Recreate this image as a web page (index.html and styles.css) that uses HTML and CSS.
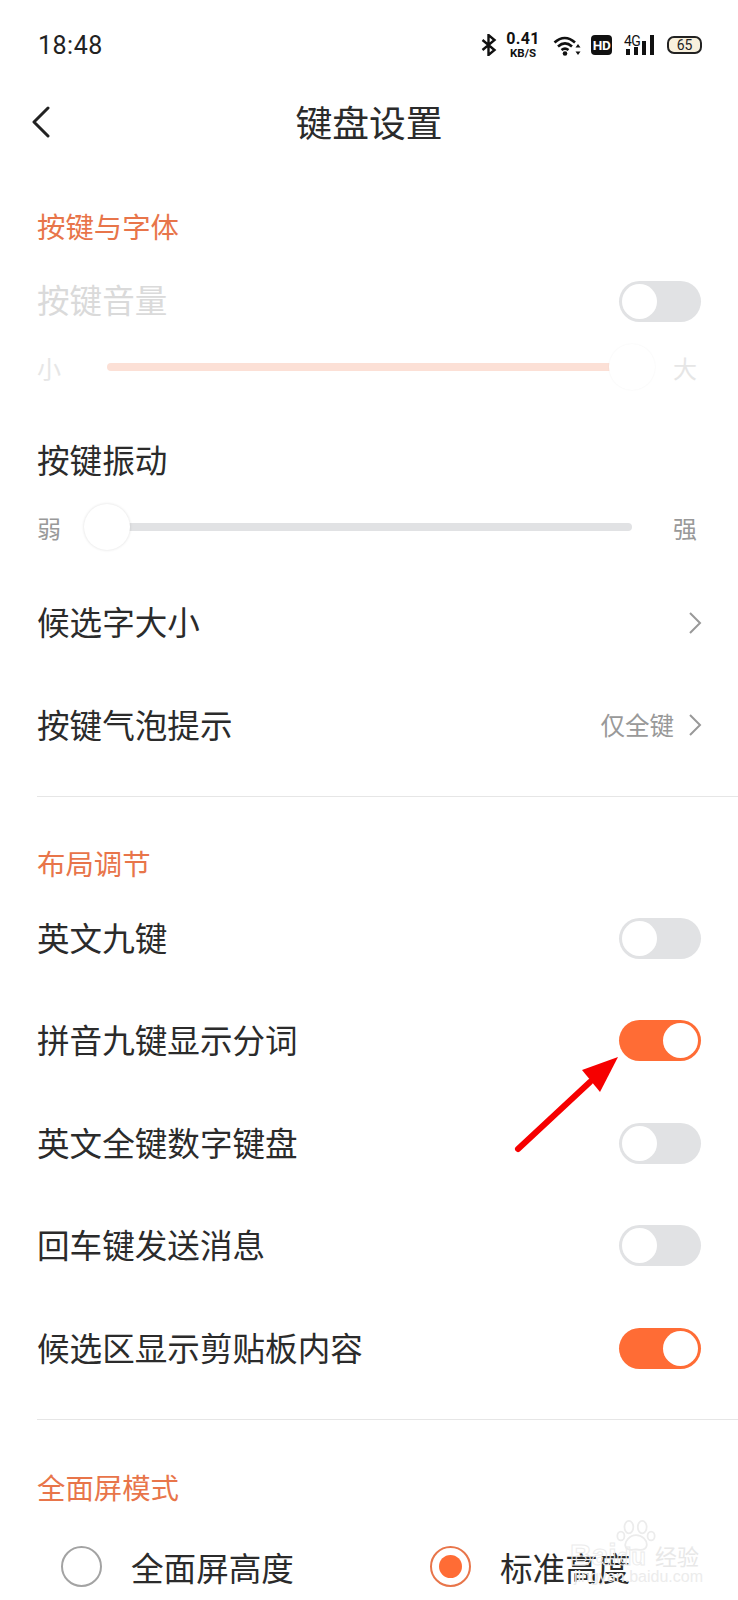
FILE: index.html
```html
<!DOCTYPE html>
<html lang="zh-CN">
<head>
    <meta charset="UTF-8">
    <meta name="viewport" content="width=device-width, initial-scale=1.0">
    <title>键盘设置</title>
    <link rel="stylesheet" href="styles.css">
</head>
<body>
    <div class="statusbar">
        <span class="time">18:48</span>
        <div class="status-icons">
            <svg class="ic-bt" width="16" height="22" viewBox="0 0 16 22"><path d="M1.5 6 13.5 16 7.5 21V1l6 5L1.500 16" fill="none" stroke="#111" stroke-width="2.4"/></svg>
            <div class="speed"><b>0.41</b><small>KB/S</small></div>
            <svg class="ic-wifi" width="28" height="21" viewBox="0 0 28 21">
                <path d="M1.500 7.500C8 1.500 15.500 1.500 22 7.500M5 11.500c4.500-4 9.500-4 14 0M8.500 15c2.500-2 4.500-2 7 0" fill="none" stroke="#111" stroke-width="2.600"/>
                <circle cx="12" cy="18.500" r="2.300" fill="#111"/>
                <path d="M25 9l2.500 3.500h-5zM25 20l2.500-3.500h-5z" fill="#111"/>
            </svg>
            <span class="hd">HD</span>
            <div class="signal">
                <span class="net">4G</span>
                <i class="b1"></i><i class="b2"></i><i class="b3"></i><i class="b4"></i>
            </div>
            <div class="battery"><span>65</span></div>
        </div>
    </div>

    <div class="topbar">
        <svg class="back" width="18" height="32" viewBox="0 0 18 32"><path d="M16 2 2 16l14 14" fill="none" stroke="#222" stroke-width="3" stroke-linecap="round" stroke-linejoin="round"/></svg>
        <h1>键盘设置</h1>
    </div>

    <div class="sec-title first">按键与字体</div>
    <div class="row disabled">
        <span>按键音量</span>
        <div class="toggle"></div>
    </div>
    <div class="slider disabled">
        <span class="lab">小</span>
        <div class="track full"><div class="thumb end"></div></div>
        <span class="lab">大</span>
    </div>
    <div class="row vib">
        <span>按键振动</span>
    </div>
    <div class="slider">
        <span class="lab">弱</span>
        <div class="track"><div class="thumb"></div></div>
        <span class="lab">强</span>
    </div>
    <div class="row spaced">
        <span>候选字大小</span>
        <svg class="chev" width="14" height="22" viewBox="0 0 14 22"><path d="M2 1l10 10L2 21" fill="none" stroke="#999" stroke-width="2"/></svg>
    </div>
    <div class="row">
        <span>按键气泡提示</span>
        <div class="value">
            <span>仅全键</span>
            <svg class="chev" width="14" height="22" viewBox="0 0 14 22"><path d="M2 1l10 10L2 21" fill="none" stroke="#999" stroke-width="2"/></svg>
        </div>
    </div>
    <div class="divider"></div>

    <div class="sec-title">布局调节</div>
    <div class="row"><span>英文九键</span><div class="toggle"></div></div>
    <div class="row"><span>拼音九键显示分词</span><div class="toggle on"></div></div>
    <div class="row"><span>英文全键数字键盘</span><div class="toggle"></div></div>
    <div class="row"><span>回车键发送消息</span><div class="toggle"></div></div>
    <div class="row"><span>候选区显示剪贴板内容</span><div class="toggle on"></div></div>
    <div class="divider"></div>

    <div class="sec-title last">全面屏模式</div>
    <div class="radios">
        <div class="radio-item"><div class="radio"></div><span>全面屏高度</span></div>
        <div class="radio-item"><div class="radio on"></div><span>标准高度</span></div>
    </div>

    <!-- red annotation arrow over the screenshot -->
    <svg class="arrow" width="110" height="102" viewBox="0 0 110 102">
        <path d="M6 95 78 28" stroke="#f60000" stroke-width="6" stroke-linecap="round"/>
        <path d="M106 3 70 16 88 38z" fill="#f60000"/>
    </svg>

    <div class="watermark">
        <svg class="paw" width="40" height="32" viewBox="0 0 44 36" fill="none" stroke="#ececec" stroke-width="2">
            <ellipse cx="14" cy="8" rx="5" ry="7"/><ellipse cx="29" cy="8" rx="5" ry="7"/>
            <ellipse cx="5" cy="18" rx="4" ry="5"/><ellipse cx="39" cy="18" rx="4" ry="5"/>
            <path d="M22 17c-7 0-13 7-12 12 1 5 7 5 12 4 5 1 11 1 12-4 1-6-5-12-12-12z"/>
        </svg>
        <div class="wm-main">Bai<em>du</em><span class="wm-cn">经验</span></div>
        <div class="wm-url">jingyan.baidu.com</div>
    </div>
</body>
</html>
```

FILE: styles.css
```css
* { box-sizing: border-box; }
html, body { margin: 0; padding: 0; }
body {
    position: relative;
    width: 738px;
    height: 1600px;
    overflow: hidden;
    background: #fff;
    color: #2b2b2b;
    font-family: "Noto Sans CJK SC", "Noto Sans", sans-serif;
}

/* status bar */
.statusbar {
    height: 90px;
    display: flex;
    align-items: center;
    justify-content: space-between;
    padding: 0 36px 0 38px;
}
.time {
    font-family: Roboto, sans-serif;
    font-size: 25px;
    color: #222;
    letter-spacing: 0.5px;
}
.status-icons {
    display: flex;
    align-items: center;
}
.ic-bt { margin-right: 10px; }
.speed {
    width: 32px;
    margin-right: 14px;
    display: flex;
    flex-direction: column;
    align-items: center;
    font-family: Roboto, sans-serif;
    color: #111;
    line-height: 1;
}
.speed b { font-size: 16px; letter-spacing: 0.3px; }
.speed small { font-size: 11.500px; font-weight: 700; margin-top: 1px; }
.ic-wifi { margin-right: 10px; }
.hd {
    width: 21px;
    height: 20px;
    margin-right: 12px;
    background: #111;
    border-radius: 4px;
    color: #fff;
    font-family: Roboto, sans-serif;
    font-size: 13.500px;
    font-weight: 700;
    line-height: 20px;
    text-align: center;
    letter-spacing: -0.5px;
}
.signal {
    position: relative;
    width: 30px;
    height: 20px;
    margin-right: 13px;
    display: flex;
    align-items: flex-end;
    justify-content: flex-end;
    gap: 4px;
}
.signal i { width: 4px; background: #111; display: block; }
.signal .b1 { height: 6px; }
.signal .b2 { height: 8px; }
.signal .b3 { height: 14px; }
.signal .b4 { height: 20px; }
.net {
    position: absolute;
    left: 0;
    top: 0;
    font-family: Roboto, sans-serif;
    font-size: 14px;
    line-height: 12px;
    letter-spacing: -0.5px;
    color: #111;
}
.battery {
    width: 35px;
    height: 18px;
    border: 2px solid #222;
    border-radius: 7px;
    background: #f8f0dc;
    display: flex;
    align-items: center;
    justify-content: center;
    font-family: Roboto, sans-serif;
    font-size: 14px;
    color: #222;
}

/* title bar */
.topbar {
    height: 62px;
    display: flex;
    align-items: center;
    justify-content: center;
    position: relative;
}
.topbar h1 {
    margin: 0;
    font-size: 36.800px;
    font-weight: 400;
    color: #2b2b2b;
}
.back {
    position: absolute;
    left: 32px;
    top: 16px;
}

/* rows */
.sec-title {
    height: 45px;
    margin-top: 43.500px;
    margin-bottom: 2px;
    padding: 0 37px;
    font-size: 28.400px;
    line-height: 45px;
    color: #e8754a;
}
.sec-title.first { margin-top: 51px; margin-bottom: 3px; }
.sec-title.last { margin-top: 44.500px; }
.row {
    height: 102.500px;
    padding: 0 37px;
    display: flex;
    align-items: center;
    justify-content: space-between;
    font-size: 32.600px;
}
.row > span { margin-bottom: 4px; }
.row.spaced { margin-top: 28.500px; }
.row.vib { height: 101px; margin-top: 27px; }
.row.disabled { height: 100px; }
.row.disabled > span { margin-bottom: 6px; color: #dadada; }
.value {
    display: flex;
    align-items: center;
    gap: 14px;
    font-size: 24.500px;
    color: #999;
}
.value span { margin-bottom: 2px; }
.chev { margin-right: -1px; }
.divider {
    height: 1px;
    margin: 19px 0 0 37px;
    background: #e6e6e6;
}

/* toggle */
.toggle {
    position: relative;
    width: 82px;
    height: 41px;
    border-radius: 21px;
    background: #e1e2e4;
}
.toggle::after {
    content: "";
    position: absolute;
    left: 3px;
    top: 3px;
    width: 35px;
    height: 35px;
    border-radius: 50%;
    background: #fff;
}
.toggle.on { background: #ff6c35; }
.toggle.on::after { left: 44px; }

/* sliders */
.slider {
    height: 32px;
    padding: 0 37px;
    display: flex;
    align-items: center;
}
.lab {
    width: 24px;
    font-size: 24px;
    color: #999;
}
.slider.disabled .lab { color: #e6e6e6; }
.track {
    position: relative;
    width: 525px;
    height: 8px;
    margin: 0 41px 0 46px;
    border-radius: 4px;
    background: #e1e2e4;
}
.track.full { background: #fce0d6; }
.thumb {
    position: absolute;
    left: -23px;
    top: -19px;
    width: 46px;
    height: 46px;
    border-radius: 50%;
    background: #fff;
    box-shadow: 0 0 3px rgba(0, 0, 0, 0.14);
}
.thumb.end {
    left: auto;
    right: -23px;
    box-shadow: 0 0 2px rgba(0, 0, 0, 0.05);
}

/* radios */
.radios {
    display: flex;
    margin-top: 33.500px;
    padding-left: 61px;
    font-size: 32.600px;
}
.radio-item {
    flex: none;
    display: flex;
    align-items: center;
    gap: 29px;
}
.radio-item:first-child { width: 369px; }
.radio {
    width: 41px;
    height: 41px;
    border-radius: 50%;
    border: 2px solid #a3a3a3;
    position: relative;
}
.radio.on { border-color: #e8754a; }
.radio.on::after {
    content: "";
    position: absolute;
    left: 7px;
    top: 7px;
    width: 23px;
    height: 23px;
    border-radius: 50%;
    background: #ff6c35;
}

/* overlays */
.arrow {
    position: absolute;
    left: 512px;
    top: 1054px;
}
.watermark {
    position: absolute;
    left: 570px;
    top: 1518px;
    width: 168px;
    height: 82px;
    color: #ececec;
}
.paw {
    position: absolute;
    left: 46px;
    top: 2px;
}
.wm-main {
    position: absolute;
    left: 0;
    top: 20px;
    font-family: "Liberation Sans", sans-serif;
    font-size: 30px;
    font-weight: 700;
    white-space: nowrap;
    color: transparent;
    -webkit-text-stroke: 1px #ececec;
}
.wm-main em { font-style: normal; font-size: 24px; }
.wm-cn {
    margin-left: 9px;
    font-family: "Noto Sans CJK SC", sans-serif;
    font-size: 22px;
    font-weight: 400;
    -webkit-text-stroke: 0;
    color: #e8e8e8;
}
.wm-url {
    position: absolute;
    left: 4px;
    top: 50px;
    font-family: "Liberation Sans", sans-serif;
    font-size: 16px;
    white-space: nowrap;
}
```
